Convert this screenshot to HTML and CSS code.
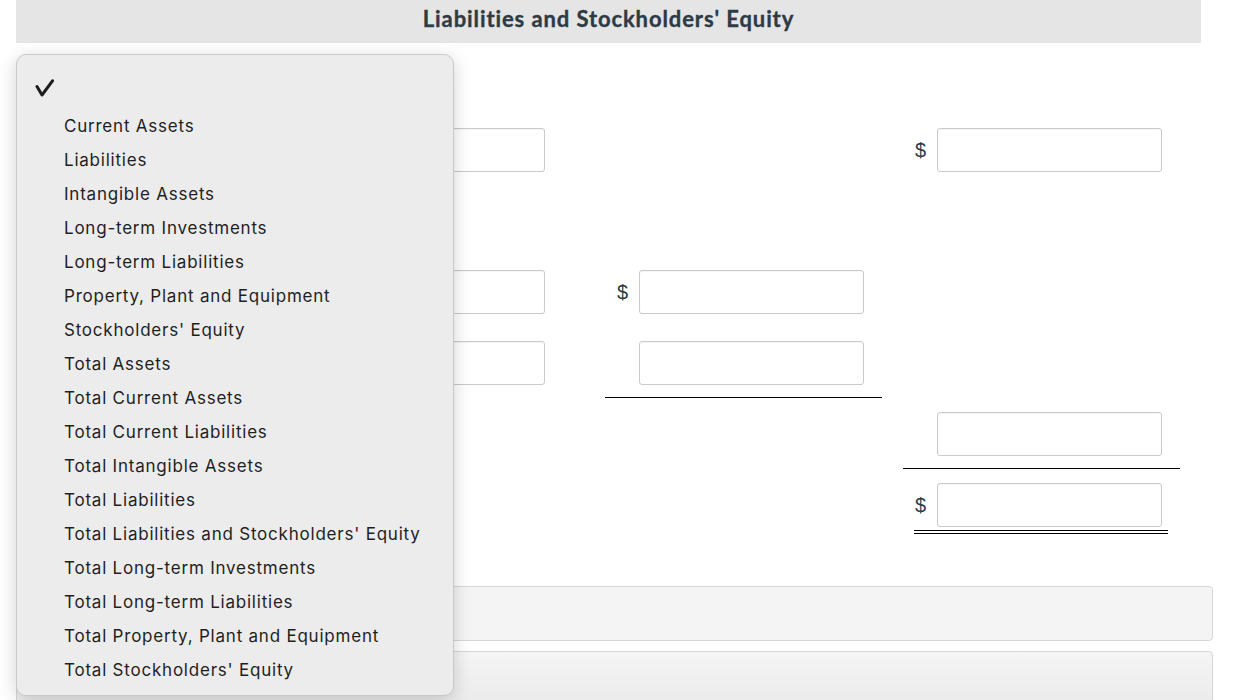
FILE: index.html
```html
<!DOCTYPE html>
<html lang="en">
<head>
<meta charset="utf-8">
<title>Balance sheet</title>
<link rel="stylesheet" href="styles.css">
</head>
<body>
<div class="page">
  <div class="header"><h2 class="title">Liabilities and Stockholders' Equity</h2></div>

  <div class="sheet">
    <div class="label"></div>
    <div class="cell c1"><div class="field"></div></div>
    <div class="cell"></div>
    <div class="cell"><span class="cur">$</span><div class="field"></div></div>

    <div class="label"></div>
    <div class="cell"></div>
    <div class="cell"></div>
    <div class="cell"></div>

    <div class="label"></div>
    <div class="cell c1"><div class="field"></div></div>
    <div class="cell"><span class="cur">$</span><div class="field"></div></div>
    <div class="cell"></div>

    <div class="label"></div>
    <div class="cell c1"><div class="field"></div></div>
    <div class="cell ruled"><span class="cur"></span><div class="field"></div></div>
    <div class="cell"></div>

    <div class="label"></div>
    <div class="cell"></div>
    <div class="cell"></div>
    <div class="cell ruled"><span class="cur"></span><div class="field"></div></div>

    <div class="label"></div>
    <div class="cell"></div>
    <div class="cell"></div>
    <div class="cell total">
      <div class="total-row"><span class="cur">$</span><div class="field"></div></div>
      <div class="dbl"></div>
    </div>
  </div>

  <div class="panel first"></div>
  <div class="panel second"></div>
</div>

<div class="menu">
  <div class="opt checked"><svg class="check" width="20" height="20" viewBox="0 0 20 20"><path d="M2 7.5 L7 16 L17.5 1.8" fill="none" stroke="#1c1c1c" stroke-width="3" stroke-linecap="round" stroke-linejoin="round"/></svg></div>
  <div class="opt">Current Assets</div>
  <div class="opt">Liabilities</div>
  <div class="opt">Intangible Assets</div>
  <div class="opt">Long-term Investments</div>
  <div class="opt">Long-term Liabilities</div>
  <div class="opt">Property, Plant and Equipment</div>
  <div class="opt">Stockholders' Equity</div>
  <div class="opt">Total Assets</div>
  <div class="opt">Total Current Assets</div>
  <div class="opt">Total Current Liabilities</div>
  <div class="opt">Total Intangible Assets</div>
  <div class="opt">Total Liabilities</div>
  <div class="opt">Total Liabilities and Stockholders' Equity</div>
  <div class="opt">Total Long-term Investments</div>
  <div class="opt">Total Long-term Liabilities</div>
  <div class="opt">Total Property, Plant and Equipment</div>
  <div class="opt">Total Stockholders' Equity</div>
</div>
</body>
</html>
```

FILE: styles.css
```css
* { box-sizing: border-box; }
html, body { margin: 0; padding: 0; background: #fff; overflow: hidden; }
body { font-family: Lato, "Liberation Sans", sans-serif; color: #2d3b45; width: 1234px; height: 700px; position: relative; }

.page { padding-left: 16px; width: 1213px; }

.header { height: 43px; margin-right: 12px; background: #e5e5e5; display: flex; justify-content: center; }
.title {
  margin: 0; font-size: 22px; font-weight: 700; line-height: 37px; color: #2d3b45;
  letter-spacing: 0.9px; font-variant-ligatures: none; -webkit-text-stroke: 0.35px #2d3b45;
}

.sheet {
  margin-top: 71px;
  display: grid;
  grid-template-columns: 270px 277px 277px 277px;
  grid-auto-rows: 71px;
  column-gap: 21px;
}
.cell { display: flex; align-items: flex-start; padding-top: 14px; padding-left: 12px; }
.cell.c1 { padding-left: 13px; }
.cell.ruled { border-bottom: 1px solid #000; }
.cur { width: 22px; flex: none; font-family: "Liberation Sans", Arial, sans-serif; font-size: 20px; line-height: 44px; color: #2d3b45; }
.field { width: 225px; height: 44px; background: #fff; border: 1px solid #cacaca; border-radius: 3px; box-shadow: inset 0 1px 1px rgba(0,0,0,0.04); }
.cell.total { flex-direction: column; padding-left: 0; }
.total-row { display: flex; padding-left: 12px; }
.dbl { margin: 3px 0 0 11px; width: 254px; height: 4px; border-top: 1px solid #000; border-bottom: 1px solid #000; }

.panel { border: 1px solid #d6d6d6; border-radius: 4px; }
.panel.first { margin-top: 46px; height: 55px; background: #f4f4f4; }
.panel.second { margin-top: 10px; height: 60px; background: linear-gradient(#f5f5f5, #eaeaea); }

.menu {
  position: absolute; left: 16px; top: 54px; width: 438px; height: 642px;
  background: #ececec; border: 1px solid #c9c9c9; border-radius: 10px;
  box-shadow: 0 4px 18px rgba(0,0,0,0.18);
  padding: 20px 0 10px 0;
  font-family: Inter, "Noto Sans", sans-serif; font-size: 17px; color: #1f1f1f;
}
.opt { height: 34px; line-height: 34px; padding-left: 47px; white-space: nowrap; letter-spacing: 0.78px; }
.opt.checked { position: relative; }
.check { position: absolute; left: 18px; top: 4px; }
```
